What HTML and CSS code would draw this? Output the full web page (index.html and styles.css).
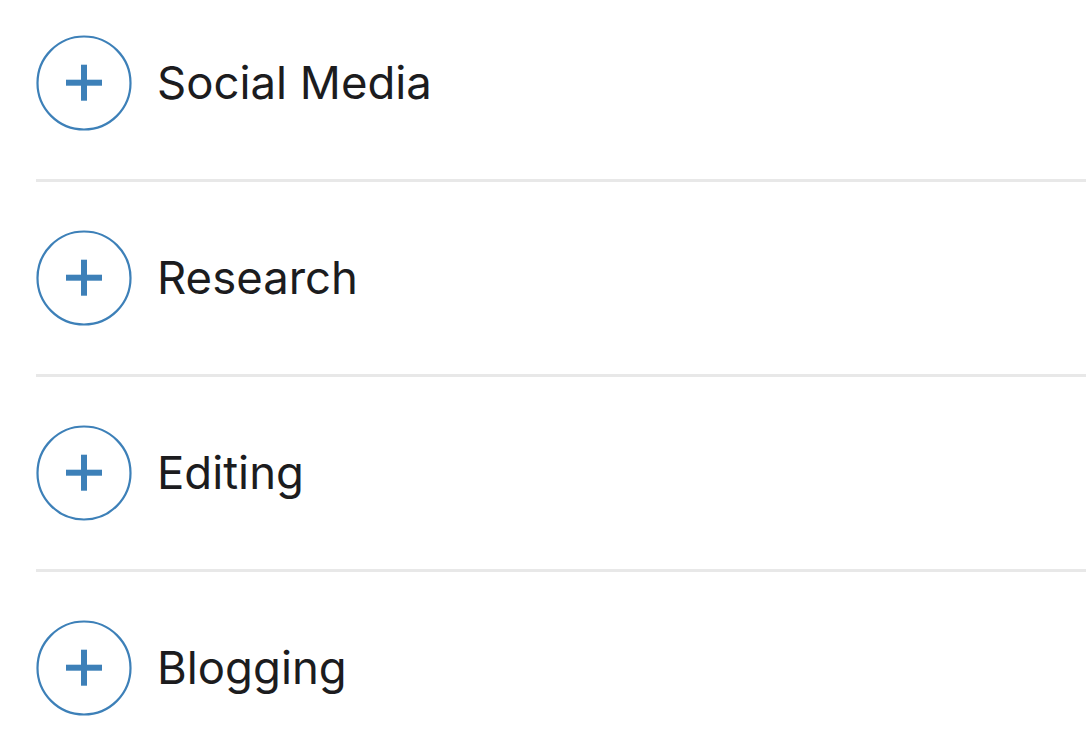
FILE: index.html
```html
<!DOCTYPE html>
<html>
<head>
<meta charset="utf-8">
<link rel="stylesheet" href="styles.css">
</head>
<body>
<ul class="list">
  <li class="item">
    <span class="add"><svg viewBox="0 0 96 96" width="96" height="96"><circle cx="48" cy="48" r="46.5" fill="none" stroke="#3d80b8" stroke-width="2.2"/><rect x="30" y="44.7" width="36" height="6" fill="#3d80b8"/><rect x="45" y="29.7" width="6" height="36" fill="#3d80b8"/></svg></span>
    <span class="label">Social Media</span>
  </li>
  <li class="item">
    <span class="add"><svg viewBox="0 0 96 96" width="96" height="96"><circle cx="48" cy="48" r="46.5" fill="none" stroke="#3d80b8" stroke-width="2.2"/><rect x="30" y="44.7" width="36" height="6" fill="#3d80b8"/><rect x="45" y="29.7" width="6" height="36" fill="#3d80b8"/></svg></span>
    <span class="label">Research</span>
  </li>
  <li class="item">
    <span class="add"><svg viewBox="0 0 96 96" width="96" height="96"><circle cx="48" cy="48" r="46.5" fill="none" stroke="#3d80b8" stroke-width="2.2"/><rect x="30" y="44.7" width="36" height="6" fill="#3d80b8"/><rect x="45" y="29.7" width="6" height="36" fill="#3d80b8"/></svg></span>
    <span class="label">Editing</span>
  </li>
  <li class="item">
    <span class="add"><svg viewBox="0 0 96 96" width="96" height="96"><circle cx="48" cy="48" r="46.5" fill="none" stroke="#3d80b8" stroke-width="2.2"/><rect x="30" y="44.7" width="36" height="6" fill="#3d80b8"/><rect x="45" y="29.7" width="6" height="36" fill="#3d80b8"/></svg></span>
    <span class="label">Blogging</span>
  </li>
</ul>
</body>
</html>
```
FILE: styles.css
```css
html, body {
  margin: 0;
  padding: 0;
  background: #ffffff;
}
body {
  font-family: Inter, "Noto Sans", sans-serif;
  color: #1c1c1e;
  overflow: hidden;
}
.list {
  list-style: none;
  margin: 0;
  padding: 35px 0 0 36px;
}
.item {
  display: flex;
  align-items: center;
  gap: 25px;
  padding: 48px 0;
  border-bottom: 3px solid #e8e8e8;
}
.item:first-child {
  padding-top: 0;
}
.add {
  display: flex;
  width: 96px;
  height: 96px;
  flex: none;
}
.label {
  font-size: 45.5px;
  line-height: 1;
  letter-spacing: 0;
}
```
